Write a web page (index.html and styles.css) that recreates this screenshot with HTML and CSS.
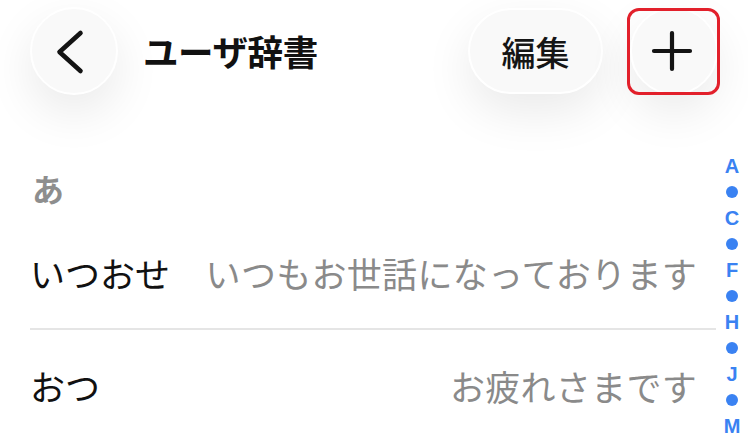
FILE: index.html
```html
<!DOCTYPE html>
<html lang="ja">
<head>
<meta charset="utf-8">
<title>ユーザ辞書</title>
<link rel="stylesheet" href="styles.css">
</head>
<body>
<div class="page">
  <header class="header">
    <button class="circle-btn back-btn" aria-label="戻る">
      <svg width="84" height="84" viewBox="2 2 84 84"><polyline points="50.5,26 29.5,45 50.5,64" fill="none" stroke="#141414" stroke-width="4.6" stroke-linecap="round" stroke-linejoin="round"/></svg>
    </button>
    <h1 class="title">ユーザ辞書</h1>
    <div class="spacer"></div>
    <button class="pill-btn">編集</button>
    <div class="plus-wrap">
      <button class="circle-btn" aria-label="追加">
        <svg width="84" height="84" viewBox="2 2 84 84"><path d="M24 44H60M42 26V62" fill="none" stroke="#141414" stroke-width="4.2" stroke-linecap="round"/></svg>
      </button>
      <div class="highlight"></div>
    </div>
  </header>
  <main class="content">
    <section class="list">
      <div class="section-head">あ</div>
      <div class="row">
        <span class="word">いつおせ</span>
        <span class="phrase">いつもお世話になっております</span>
      </div>
      <div class="row">
        <span class="word">おつ</span>
        <span class="phrase">お疲れさまです</span>
      </div>
    </section>
    <nav class="index">
      <span class="idx">A</span>
      <span class="dot"></span>
      <span class="idx">C</span>
      <span class="dot"></span>
      <span class="idx">F</span>
      <span class="dot"></span>
      <span class="idx">H</span>
      <span class="dot"></span>
      <span class="idx">J</span>
      <span class="dot"></span>
      <span class="idx">M</span>
    </nav>
  </main>
</div>
</body>
</html>
```
FILE: styles.css
```css
* { box-sizing: border-box; }
html, body { margin: 0; padding: 0; background: #ffffff; }
body {
  width: 748px;
  height: 438px;
  overflow: hidden;
  font-family: "Noto Sans CJK JP", "Noto Sans", sans-serif;
  color: #111111;
}
.page { display: flex; flex-direction: column; }
.header {
  height: 102px;
  display: flex;
  align-items: center;
  padding: 0 30px 0 30px;
}
.circle-btn {
  width: 88px;
  height: 88px;
  border-radius: 50%;
  border: 2px solid #ffffff;
  background: #f9f9f9;
  box-shadow: 0 18px 48px rgba(0, 0, 0, 0.085);
  padding: 0;
  display: flex;
  align-items: center;
  justify-content: center;
  flex-shrink: 0;
}
.circle-btn svg { display: block; }
.title {
  margin: 0 0 0 25px;
  font-size: 35.5px;
  font-weight: 700;
  line-height: 1;
  letter-spacing: -0.4px;
}
.spacer { flex: 1; }
.pill-btn {
  width: 135px;
  height: 86px;
  border-radius: 43px;
  border: 2px solid #ffffff;
  background: #f9f9f9;
  box-shadow: 0 18px 48px rgba(0, 0, 0, 0.085);
  font-family: "Noto Sans CJK JP", sans-serif;
  font-size: 34px;
  font-weight: 500;
  color: #151515;
  padding: 0;
  margin-right: 27px;
}
.plus-wrap { position: relative; }
.highlight {
  position: absolute;
  top: 1px;
  bottom: 0;
  left: -3px;
  right: -2px;
  border: 3px solid #e2202b;
  border-radius: 12px;
}
.content {
  display: flex;
  padding-left: 30px;
}
.list { width: 686px; }
.section-head {
  margin-top: 58px;
  height: 56px;
  line-height: 56px;
  font-size: 32px;
  font-weight: 700;
  color: #8e8e8e;
  padding-left: 2px;
}
.row {
  height: 112px;
  display: flex;
  align-items: center;
  justify-content: space-between;
  padding: 0 19px 0 0;
  font-size: 35px;
}
.row + .row { border-top: 2px solid #e5e5e5; }
.word { color: #111111; white-space: nowrap; }
.phrase { color: #8a8a8a; white-space: nowrap; letter-spacing: 0.3px; }
.index {
  width: 32px;
  margin-top: 51px;
  display: flex;
  flex-direction: column;
  align-items: center;
}
.idx {
  height: 26px;
  line-height: 26px;
  font-family: "Liberation Sans", Arial, sans-serif;
  font-weight: 700;
  font-size: 20px;
  color: #3a82f2;
}
.dot {
  width: 12px;
  height: 12px;
  border-radius: 50%;
  background: #3a82f2;
  margin: 7px 0;
}
```
